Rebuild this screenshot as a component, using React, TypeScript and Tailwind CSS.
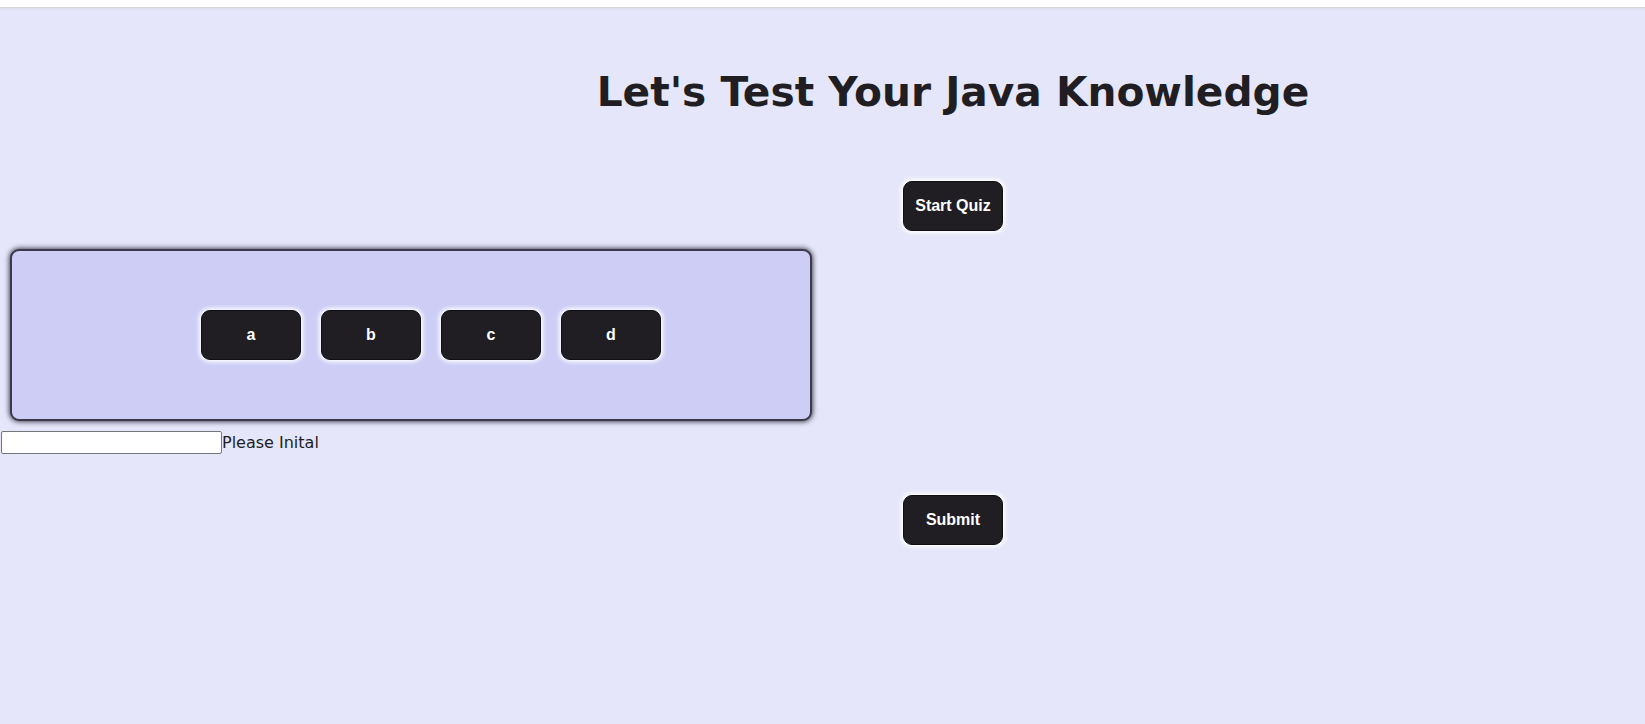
const choices = ["a", "b", "c", "d"];

function QuizButton({ label, className = "" }: { label: string; className?: string }) {
  return (
    <button
      className={`h-[50px] w-[100px] rounded-[9px] border border-[#0f0e12] bg-[#201e23] text-[16px] font-bold text-white shadow-[0_0_4px_2px_#ffffff] ${className}`}
      style={{ fontFamily: '"Liberation Sans", Arial, sans-serif' }}
    >
      {label}
    </button>
  );
}

export default function App() {
  return (
    <div className="min-h-[724px] bg-[#e5e6f9] text-[#201e23]" style={{ fontFamily: '"DejaVu Sans", Verdana, sans-serif' }}>
      <div className="h-[7px] bg-white" />
      <div className="h-[1px] bg-[#d6d6dc]" />
      <div className="h-[2px] bg-[#dfe0f0]" />

      <div className="pl-[261px] pt-[59px] text-center">
        <h1 className="text-[40.7px] font-bold leading-[47px]">Let's Test Your Java Knowledge</h1>
        <div className="mt-[65px] flex justify-center">
          <QuizButton label="Start Quiz" />
        </div>
      </div>

      <div className="ml-[10px] mt-[18px] flex h-[172px] w-[802px] items-center rounded-[9px] border-2 border-[#3c3a4a] bg-[#cdcdf6] pl-[189px] shadow-[0_0_5px_1px_#4a4858]">
        <div className="flex gap-[20px]">
          {choices.map((c) => (
            <QuizButton key={c} label={c} />
          ))}
        </div>
      </div>

      <div className="mt-[10px] flex items-center">
        <input className="ml-[1px] h-[23px] w-[221px] rounded-[2px] border border-[#767676] bg-white" />
        <span className="text-[16px] leading-[23px]">Please Inital</span>
      </div>

      <div className="mt-[41px] pl-[261px] flex justify-center">
        <QuizButton label="Submit" />
      </div>
    </div>
  );
}
